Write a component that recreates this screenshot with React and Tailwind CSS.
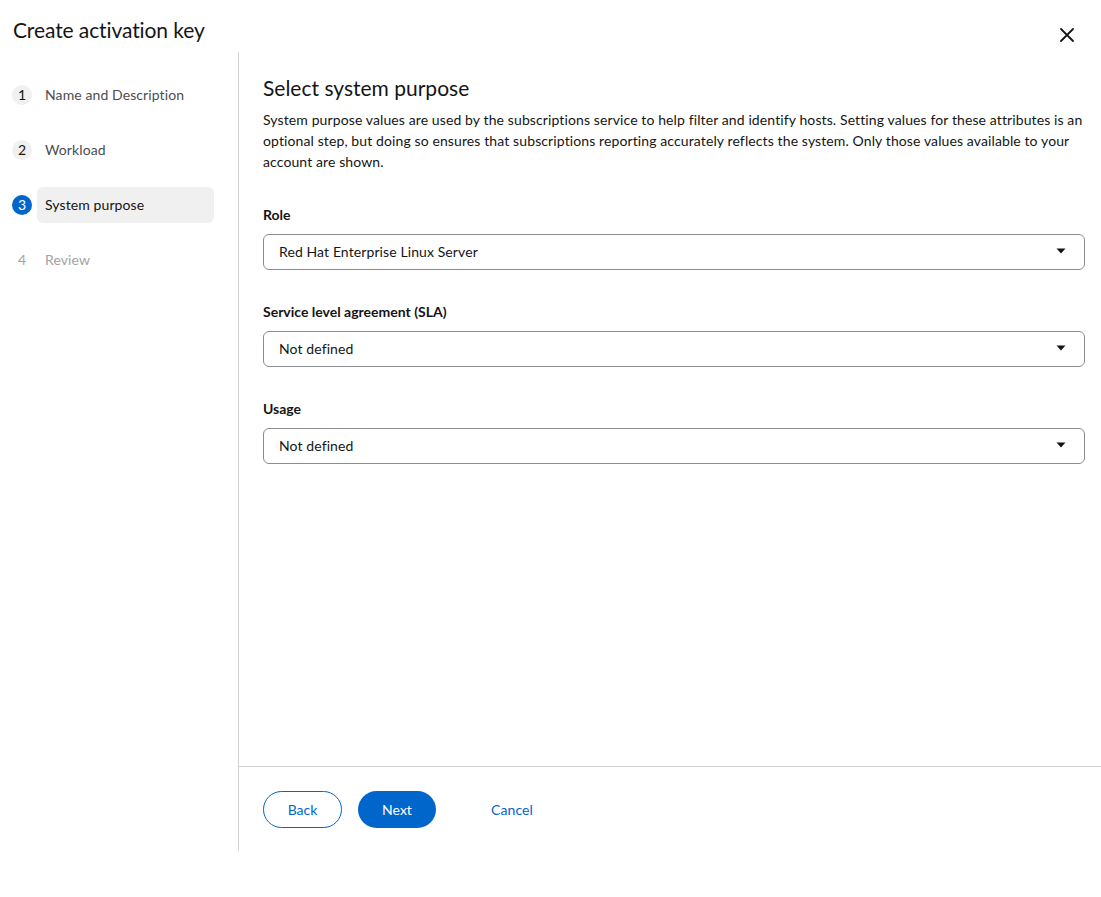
import React from "react";

const steps = [
  { n: 1, label: "Name and Description", state: "done" },
  { n: 2, label: "Workload", state: "done" },
  { n: 3, label: "System purpose", state: "current" },
  { n: 4, label: "Review", state: "disabled" },
];

const fields = [
  { label: "Role", value: "Red Hat Enterprise Linux Server" },
  { label: "Service level agreement (SLA)", value: "Not defined" },
  { label: "Usage", value: "Not defined" },
];

function Caret() {
  return (
    <svg width="10" height="6" viewBox="0 0 10 6" className="fill-[#151515]">
      <path d="M0.5 0.5h9L5 5.5z" />
    </svg>
  );
}

function NavItem({ step }) {
  const current = step.state === "current";
  const disabled = step.state === "disabled";
  return (
    <li className="flex items-center">
      <span
        className={
          current
            ? "flex h-5 w-5 items-center justify-center rounded-full bg-[#0066cc] pb-px text-[14px] text-white"
            : disabled
            ? "flex h-5 w-5 items-center justify-center rounded-full pb-px text-[14px] text-[#a3a3a3]"
            : "flex h-5 w-5 items-center justify-center rounded-full bg-[#f0f0f0] pb-px text-[14px] text-[#151515]"
        }
      >
        {step.n}
      </span>
      <span
        className={
          current
            ? "ml-[5px] flex h-9 flex-1 items-center rounded-md bg-[#f0f0f0] px-2 pb-[2px] text-[14px] tracking-[0.1px] text-[#151515]"
            : disabled
            ? "ml-[5px] flex h-9 flex-1 items-center px-2 pb-[2px] text-[14px] tracking-[0.1px] text-[#a3a3a3]"
            : "ml-[5px] flex h-9 flex-1 items-center px-2 pb-[2px] text-[14px] tracking-[0.1px] text-[#4d4d4d]"
        }
      >
        {step.label}
      </span>
    </li>
  );
}

export default function App() {
  return (
    <div
      className="flex h-[897px] flex-col bg-white text-[#151515]"
      style={{ fontFamily: "Lato, 'Liberation Sans', sans-serif" }}
    >
      <div className="flex h-[52px] items-start justify-between pl-[13px] pr-[27px] pt-[16px]">
        <h1 className="text-[21px] leading-[28px] tracking-[-0.1px]">
          Create activation key
        </h1>
        <button className="mt-[12px] text-[#151515]">
          <svg width="14" height="14" viewBox="0 0 14 14">
            <path
              d="M1 1L13 13M13 1L1 13"
              stroke="#151515"
              strokeWidth="1.8"
              strokeLinecap="round"
            />
          </svg>
        </button>
      </div>

      <div className="flex h-[799px]">
        <nav className="w-[239px] border-r border-[#d2d2d2] pl-3 pr-6 pt-[25px]">
          <ol className="flex flex-col gap-[19px]">
            {steps.map((s) => (
              <NavItem key={s.n} step={s} />
            ))}
          </ol>
        </nav>

        <div className="flex flex-1 flex-col">
          <div className="flex-1 pl-6 pr-4 pt-[23px]">
            <h2 className="text-[21px] leading-[26px]">Select system purpose</h2>
            <p className="mt-2 text-[14px] leading-[21px] tracking-[0.11px]">
              System purpose values are used by the subscriptions service to
              help filter and identify hosts. Setting values for these
              attributes is an optional step, but doing so ensures that
              subscriptions reporting accurately reflects the system. Only
              those values available to your account are shown.
            </p>
            <div className="mt-[33px] flex flex-col gap-8">
              {fields.map((f) => (
                <div key={f.label}>
                  <label className="block text-[14px] font-bold leading-[19px]">
                    {f.label}
                  </label>
                  <button className="mt-[10px] flex h-9 w-full items-center justify-between rounded-md border border-[#8a8d90] pb-[2px] pl-[15px] pr-[18px] text-left text-[14px] tracking-[0.1px]">
                    <span>{f.value}</span>
                    <Caret />
                  </button>
                </div>
              ))}
            </div>
          </div>

          <footer className="flex h-[85px] items-center border-t border-[#d2d2d2] pl-6">
            <button className="h-[37px] w-[79px] rounded-full border border-[#0066cc] text-[14px] text-[#0066cc]">
              Back
            </button>
            <button className="ml-4 h-[37px] w-[78px] rounded-full bg-[#0066cc] text-[14px] text-white">
              Next
            </button>
            <button className="ml-[39px] h-[37px] px-4 text-[14px] tracking-[0.1px] text-[#0066cc]">
              Cancel
            </button>
          </footer>
        </div>
      </div>
    </div>
  );
}
